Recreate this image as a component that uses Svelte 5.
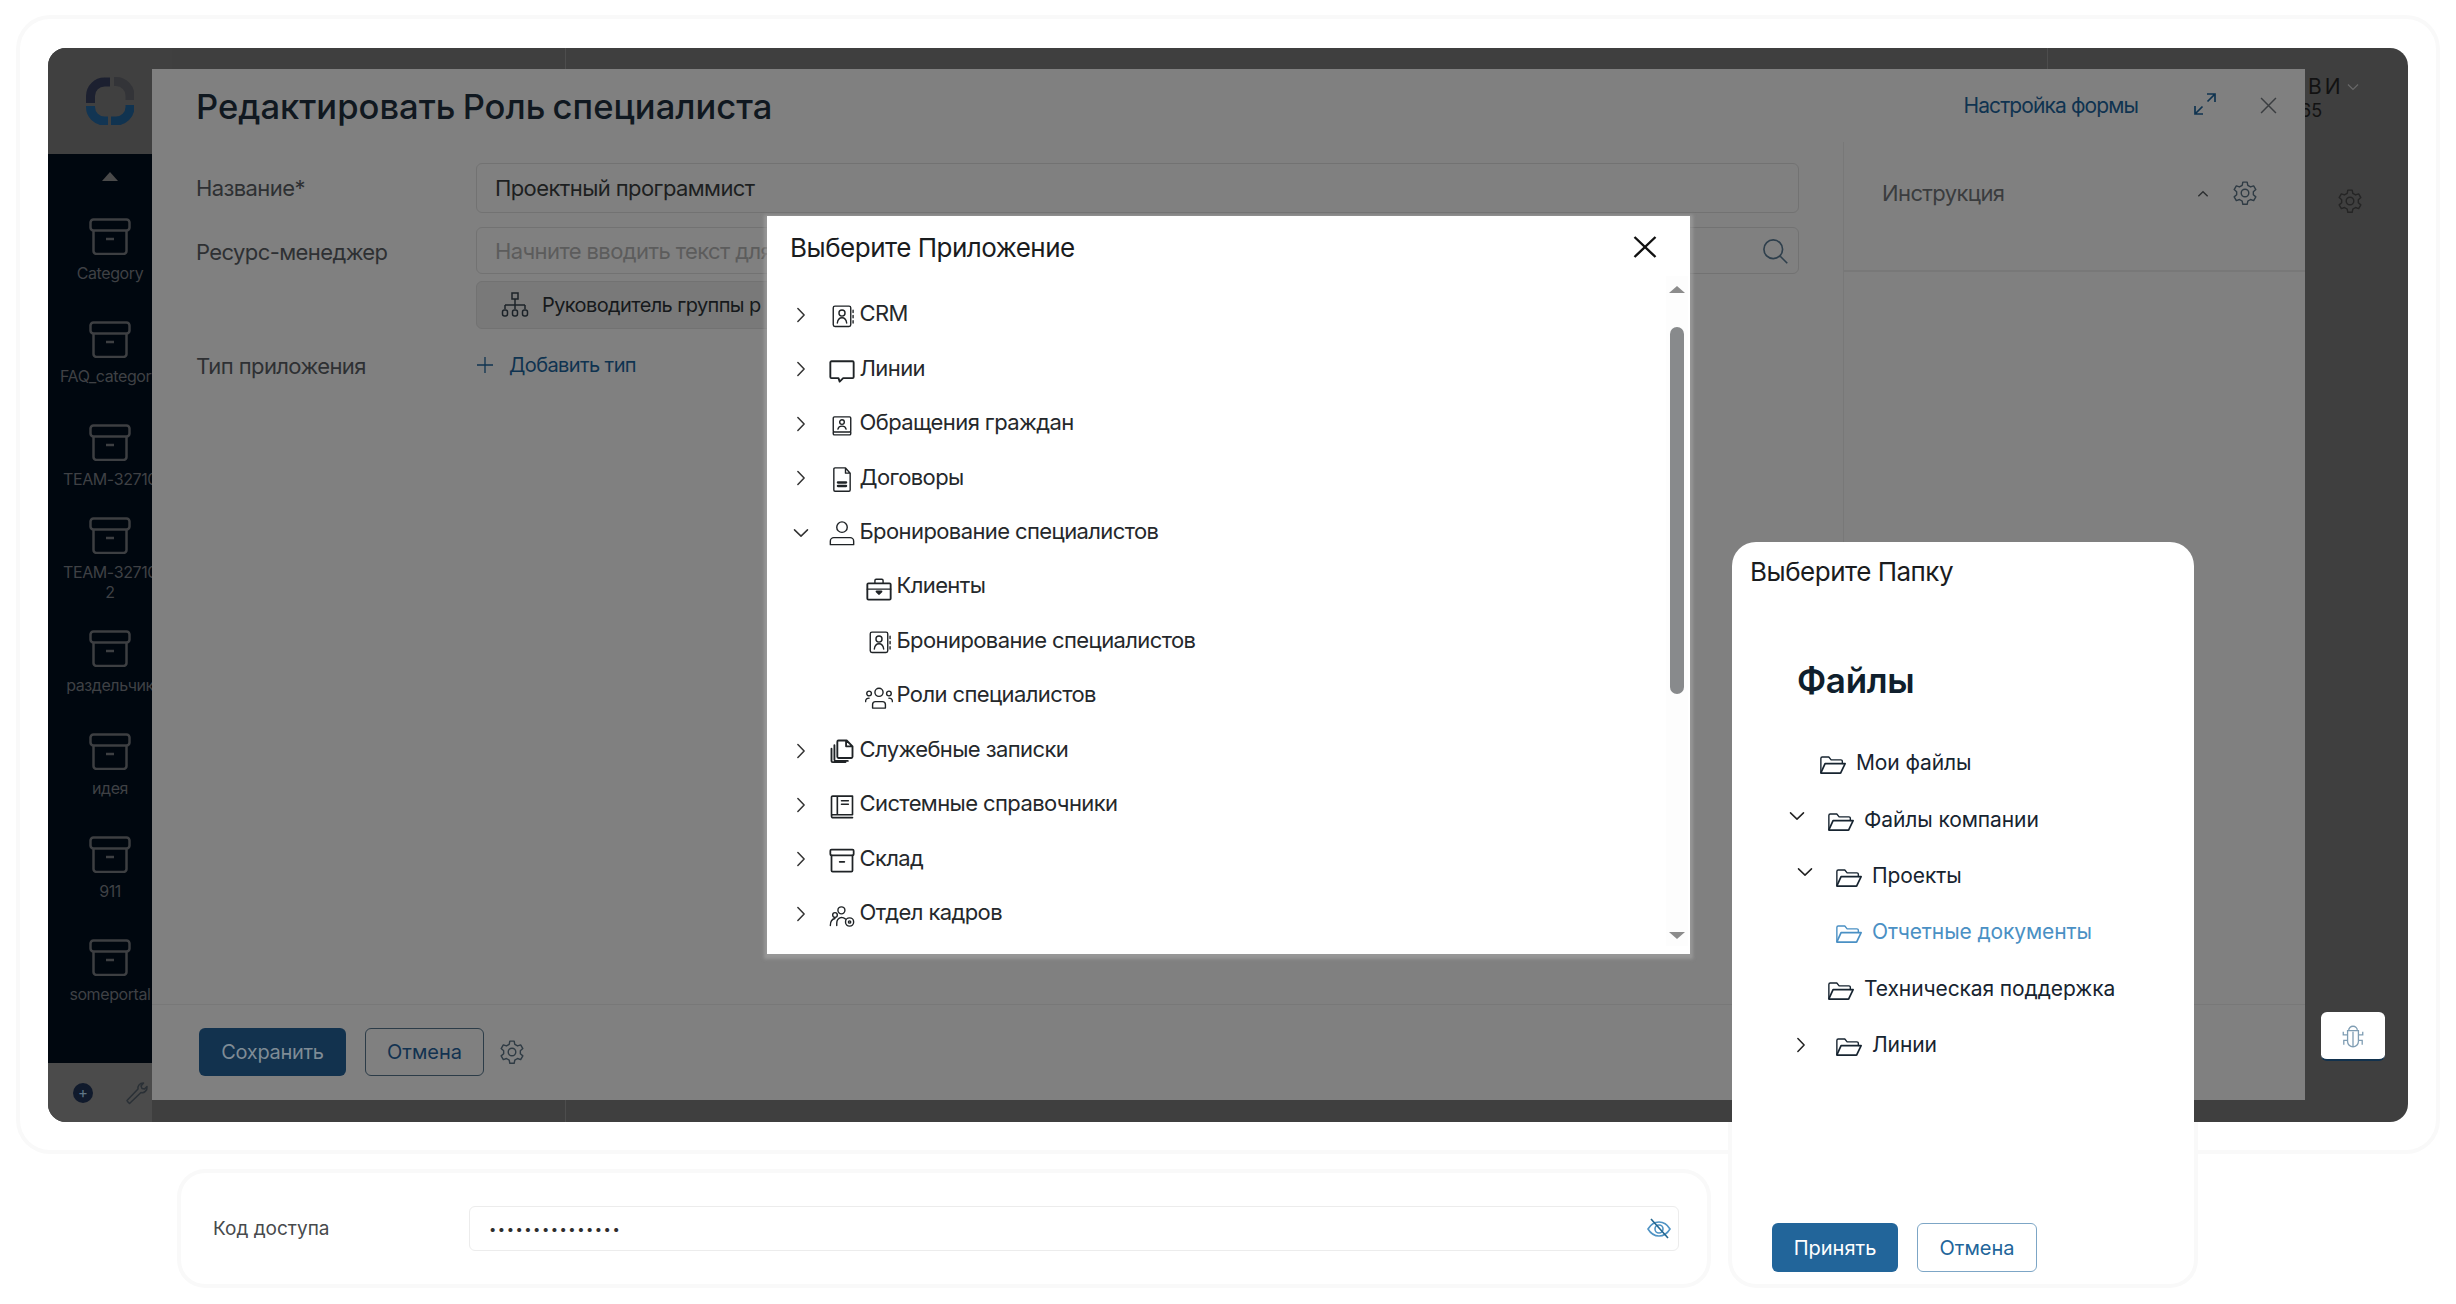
<script>
  const sideItems = [
    { label: "Category" },
    { label: "FAQ_category" },
    { label: "TEAM-32710" },
    { label: "TEAM-32710", extra: "2" },
    { label: "раздельчик" },
    { label: "идея" },
    { label: "911" },
    { label: "someportal" }
  ];

  const apps = [
    { icon: "contact", label: "CRM", arrow: "right" },
    { icon: "chat", label: "Линии", arrow: "right" },
    { icon: "citizen", label: "Обращения граждан", arrow: "right" },
    { icon: "doc", label: "Договоры", arrow: "right" },
    { icon: "person", label: "Бронирование специалистов", arrow: "down" },
    { icon: "case", label: "Клиенты", child: true },
    { icon: "contact", label: "Бронирование специалистов", child: true },
    { icon: "group", label: "Роли специалистов", child: true },
    { icon: "copies", label: "Служебные записки", arrow: "right" },
    { icon: "book", label: "Системные справочники", arrow: "right" },
    { icon: "box", label: "Склад", arrow: "right" },
    { icon: "hr", label: "Отдел кадров", arrow: "right" }
  ];

  const folders = [
    { label: "Мои файлы", cls: "lvl-a" },
    { label: "Файлы компании", cls: "lvl-b", arrow: "down" },
    { label: "Проекты", cls: "lvl-c", arrow: "down" },
    { label: "Отчетные документы", cls: "lvl-c active" },
    { label: "Техническая поддержка", cls: "lvl-b" },
    { label: "Линии", cls: "lvl-c", arrow: "right" }
  ];
</script>

{#snippet glyph(name)}
  <svg class="ico" viewBox="0 0 24 24" fill="none" stroke="currentColor" stroke-width="1.200" stroke-linecap="round" stroke-linejoin="round">
    {#if name === "contact"}
      <rect x="4.500" y="3.500" width="15" height="17.500" rx="1.500" />
      <circle cx="12" cy="9.500" r="2.600" />
      <path d="M8 18c.4-3 2-4.500 4-4.500s3.600 1.500 4 4.500M21.500 7v2M21.500 11.500v2M21.500 16v2" />
    {:else if name === "chat"}
      <path stroke-width="1.600" d="M3 4.500h18a1 1 0 0 1 1 1V18a1 1 0 0 1-1 1h-8l-3 3-1-3H3a1 1 0 0 1-1-1V5.500a1 1 0 0 1 1-1z" />
    {:else if name === "citizen"}
      <rect x="4.500" y="5" width="15" height="13" rx="1" />
      <circle cx="12" cy="9.500" r="2" />
      <path d="M8.500 15.500c.5-2 2-2.500 3.500-2.500s3 .5 3.500 2.500M4.500 18v1.500a1 1 0 0 0 1 1h13a1 1 0 0 0 1-1V18" />
    {:else if name === "doc"}
      <path d="M6 2.500h9l4 4.500v14.500a1 1 0 0 1-1 1H6a1 1 0 0 1-1-1v-18a1 1 0 0 1 1-1zM15 2.500V7h4" />
      <path stroke-width="2" d="M8.500 15h7M8.500 18h7" />
    {:else if name === "person"}
      <circle cx="12" cy="7" r="4.500" />
      <path d="M2 22v-3a3 3 0 0 1 3-3h14a3 3 0 0 1 3 3v3z" />
    {:else if name === "case"}
      <rect x="2" y="8" width="20" height="14" rx="1" stroke-width="1.600" />
      <path d="M8.500 8V5.500a1 1 0 0 1 1-1h5a1 1 0 0 1 1 1V8M2 13h20" />
      <path stroke-width="1.800" d="M10 15h4l-2 2z" />
    {:else if name === "group"}
      <circle cx="12" cy="8" r="3.500" />
      <circle cx="3.500" cy="9" r="2" />
      <circle cx="20.500" cy="9" r="2" />
      <path d="M6.500 21.500v-3a2.500 2.500 0 0 1 2.500-2.500h6a2.500 2.500 0 0 1 2.500 2.500v3zM.5 16c0-2 1-3 3-3M23.500 16c0-2-1-3-3-3" />
    {:else if name === "copies"}
      <path stroke-width="1.600" d="M9 3h7l5 5v9a1 1 0 0 1-1 1H9a1 1 0 0 1-1-1V4a1 1 0 0 1 1-1zM15.500 3v5H21" />
      <path stroke-width="1.600" d="M5.500 7v12.500a1 1 0 0 0 1 1H17M3 10v10.500a1 1 0 0 0 1 1h11" />
    {:else if name === "book"}
      <path stroke-width="1.400" d="M3 4.500a1 1 0 0 1 1-1h17v16H4a1 1 0 0 0-1 1zM8 3.500v16M3 20.500a1.500 1.500 0 0 0 1.500 1.500H21" />
      <path d="M11.500 7.500h6M11.500 10.500h6" />
    {:else if name === "box"}
      <rect x="2" y="3" width="20" height="5" rx="1" stroke-width="1.500" />
      <path stroke-width="1.500" d="M3 8v13a1 1 0 0 0 1 1h16a1 1 0 0 0 1-1V8M10 13.500h4" />
    {:else if name === "hr"}
      <circle cx="11.500" cy="8" r="3" />
      <circle cx="6" cy="12" r="2" />
      <path d="M2 21c0-3.500 1.500-5.500 4-6M7.500 21v-2c0-2.500 1.500-4.500 4-5 1.500 0 2.500.5 3.500 1.500" />
      <circle cx="18.500" cy="18" r="3.500" />
      <circle cx="18.500" cy="18" r="1" />
    {/if}
  </svg>
{/snippet}

{#snippet chevron(dir)}
  <svg class="chev" class:down={dir === "down"} viewBox="0 0 16 16" fill="none" stroke="currentColor" stroke-width="1.200" stroke-linecap="round" stroke-linejoin="round">
    <path d="M5.500 2.800 10.500 8 5.500 13.200" />
  </svg>
{/snippet}

{#snippet gear()}
  <svg class="gear" viewBox="0 0 24 24" fill="none" stroke="currentColor" stroke-width="1.300" stroke-linejoin="round">
    <path d="M10 2h4l.6 3 2.500 1.400 2.900-1 2 3.400-2.300 2 0 2.800 2.300 2-2 3.400-2.900-1-2.500 1.400-.6 3h-4l-.6-3-2.500-1.400-2.900 1-2-3.400 2.300-2 0-2.800-2.300-2 2-3.400 2.900 1L9.400 5z" />
    <circle cx="12" cy="12" r="3.500" />
  </svg>
{/snippet}

{#snippet folderIcon()}
  <svg class="folder" viewBox="0 0 30 24" fill="none" stroke="currentColor" stroke-width="1.500" stroke-linejoin="round" stroke-linecap="round">
    <path d="M2 20V5a1.500 1.500 0 0 1 1.500-1.500h7l2.500 3h10.500a1.500 1.500 0 0 1 1.500 1.500v2.500" />
    <path stroke-width="1.800" d="M2 20.500 6.500 10.500H28L23.500 20a1 1 0 0 1-1 .8H2.500z" />
  </svg>
{/snippet}

<div class="page">
  <section class="frame">
    <div class="app">
      <aside class="side">
        <div class="logo">
          <svg viewBox="0 0 48 48" width="48" height="48" fill="none" stroke-width="9">
            <path d="M4.500 26V19A14 14 0 0 1 18.500 5H24" stroke="#1c2030" />
            <path d="M28 4.500H30A14 14 0 0 1 44 19V23" stroke="#333438" />
            <path d="M44 28V30A14 14 0 0 1 30 44H25" stroke="#103350" />
            <path d="M22 44H18.500A14 14 0 0 1 4.500 30V29" stroke="#123553" />
          </svg>
        </div>
        <div class="side-list">
          <div class="tri"></div>
          {#each sideItems as it}
            <div class="side-item">
              <svg class="arch" viewBox="0 0 42 37" fill="none" stroke="#3d3f42" stroke-width="2.500" stroke-linejoin="round">
                <rect x="1.500" y="1.500" width="39" height="11" rx="3" />
                <path d="M4.500 12.500V33a3 3 0 0 0 3 3h27a3 3 0 0 0 3-3V12.500M17 21h8" />
              </svg>
              <span>{it.label}</span>
              {#if it.extra}<span>{it.extra}</span>{/if}
            </div>
          {/each}
        </div>
        <div class="side-foot">
          <span class="plus">+</span>
          <svg class="wrench" viewBox="0 0 24 24" fill="none" stroke="#2a3036" stroke-width="1.500" stroke-linejoin="round">
            <path d="M3 21l-1-1.500L13 8c-.5-3 1.500-6 5.500-6l-2.500 3 1 2.500 2.500.5L22 5.500c.5 4-3 7-6 6L4.500 22.500z" />
          </svg>
        </div>
      </aside>
      <div class="rest">
        <div class="user">
          ВИ
          <svg class="user-caret" viewBox="0 0 12 8" fill="none" stroke="#686868" stroke-width="1.200"><path d="M1 1.500 6 6.500 11 1.500" /></svg>
        </div>
        <div class="user-sub">65</div>
        <div class="rest-gear">{@render gear()}</div>
      </div>

      <!-- форма поверх страницы -->
      <div class="panel">
        <header class="panel-head">
          <h1>Редактировать Роль специалиста</h1>
          <div class="head-tools">
            <span class="link">Настройка формы</span>
            <svg class="expand" viewBox="0 0 24 24" fill="none" stroke="#0f3350" stroke-width="1.700">
              <path d="M14 2h8v8M21.500 2.500l-7 7M10 22H2v-8M2.500 21.500l7-7" />
            </svg>
            <svg class="close-sm" viewBox="0 0 16 16" fill="none" stroke="#3a3d40" stroke-width="1.400">
              <path d="M1 1l14 14M15 1 1 15" />
            </svg>
          </div>
        </header>
        <div class="panel-body">
          <div class="form">
            <div class="lbl">Название*</div>
            <div class="input first">Проектный программист</div>
            <div class="lbl">Ресурс-менеджер</div>
            <div class="stack">
              <div class="input second">
                <span class="ph">Начните вводить текст для</span>
                <svg class="search" viewBox="0 0 24 24" fill="none" stroke="#2e3f4c" stroke-width="1.400">
                  <circle cx="10.500" cy="10.500" r="8" />
                  <path d="M16.500 16.500 22.500 22.500" />
                </svg>
              </div>
              <div class="chip">
                <svg class="org" viewBox="0 0 28 28" fill="none" stroke="#1c2329" stroke-width="1.500">
                  <rect x="11" y="2" width="6" height="6" />
                  <path d="M14 8v6M4 14h20M4 14v4M14 14v4M24 14v4" />
                  <rect x="1.500" y="19" width="5" height="6" rx="2" />
                  <rect x="11.500" y="19" width="5" height="6" rx="2" />
                  <rect x="21.500" y="19" width="5" height="6" rx="2" />
                </svg>
                Руководитель группы р
              </div>
            </div>
            <div class="lbl type">Тип приложения</div>
            <div class="add">
              <svg class="add-plus" viewBox="0 0 18 18" fill="none" stroke="#0f3350" stroke-width="1.300"><path d="M9 1v16M1 9h16" /></svg>
              Добавить тип
            </div>
          </div>
          <div class="info">
            <div class="info-head">
              <span>Инструкция</span>
              <svg class="caret" viewBox="0 0 12 12" fill="none" stroke="#2c2f31" stroke-width="1.200"><path d="M2 8l4-4 4 4" /></svg>
              {@render gear()}
            </div>
          </div>
        </div>
        <footer class="panel-foot">
          <button class="btn dark-primary">Сохранить</button>
          <button class="btn dark-ghost">Отмена</button>
          {@render gear()}
        </footer>
      </div>

      <div class="bug">
        <svg viewBox="0 0 24 24" fill="none" stroke="#7f9db3" stroke-width="1.200">
          <path d="M8 7a4 4 0 0 1 8 0zM7 7h10v10a5 5 0 0 1-10 0zM12 8v14M7 11H3V8M17 11h4V8M7 16H3.500v4M17 16h3.500v4" />
        </svg>
      </div>
    </div>
  </section>

  <section class="code-card">
    <div class="code-lbl">Код доступа</div>
    <div class="code-input">
      <span class="dots">•••••••••••••••</span>
      <svg class="eye" viewBox="0 0 24 24" fill="none" stroke="#4f93c4" stroke-width="1.600">
        <path d="M1 12c3-5 7-7 11-7s8 2 11 7c-3 5-7 7-11 7s-8-2-11-7z" />
        <circle cx="12" cy="12" r="4" />
        <path stroke="#23668f" d="M4 2l17 19" />
      </svg>
    </div>
  </section>

  <!-- окно выбора приложения -->
  <div class="dlg-app">
    <div class="dlg-title">
      <span>Выберите Приложение</span>
      <svg class="close-lg" viewBox="0 0 24 22" fill="none" stroke="#111" stroke-width="2.400">
        <path d="M1.500 1 22.500 21M22.500 1 1.500 21" />
      </svg>
    </div>
    <ul class="tree">
      {#each apps as a}
        <li class="row" class:child={a.child}>
          {#if a.arrow}{@render chevron(a.arrow)}{/if}
          {@render glyph(a.icon)}
          <span>{a.label}</span>
        </li>
      {/each}
    </ul>
    <div class="scroll">
      <i class="up"></i>
      <b></b>
      <i class="dn"></i>
    </div>
  </div>

  <!-- окно выбора папки -->
  <div class="dlg-folder">
    <div class="f-title">Выберите Папку</div>
    <h2>Файлы</h2>
    <ul class="f-tree">
      {#each folders as f}
        <li class="f-row {f.cls}">
          {#if f.arrow}{@render chevron(f.arrow)}{/if}
          {@render folderIcon()}
          <span>{f.label}</span>
        </li>
      {/each}
    </ul>
    <div class="f-foot">
      <button class="btn primary">Принять</button>
      <button class="btn ghost">Отмена</button>
    </div>
  </div>
</div>

<style>
  :global(body) {
    background: #fff;
    font-family: Inter, "Noto Sans", sans-serif;
  }

  .page {
    position: relative;
    width: 2456px;
    height: 1304px;
    padding: 19px 20px 0;
    box-sizing: border-box;
    overflow: hidden;
  }

  .frame {
    width: 2416px;
    height: 1131px;
    padding: 29px 28px;
    box-sizing: border-box;
    background: #fff;
    border-radius: 30px;
    box-shadow: 0 0 0 4px #f9f9f9;
  }

  .app {
    position: relative;
    display: flex;
    height: 1074px;
    width: 2360px;
    background:
      linear-gradient(#4d4d4d, #4d4d4d) 517px 0 / 1px 100% no-repeat,
      linear-gradient(#4d4d4d, #4d4d4d) 1999px 0 / 1px 100% no-repeat,
      #3f3f3f;
    border-radius: 18px;
    overflow: hidden;
  }

  .side {
    width: 124px;
    display: flex;
    flex-direction: column;
    flex-shrink: 0;
    overflow: hidden;
  }

  .logo {
    height: 106px;
    flex-shrink: 0;
    display: flex;
    align-items: center;
    justify-content: center;
    background: #404040;
  }

  .side-list {
    flex: 1;
    background: #00070f;
    padding-top: 45px;
    position: relative;
  }

  .tri {
    position: absolute;
    top: 18px;
    left: 54px;
    border-left: 8px solid transparent;
    border-right: 8px solid transparent;
    border-bottom: 9px solid #4a4a4a;
  }

  .side-item {
    height: 103px;
    display: flex;
    flex-direction: column;
    align-items: center;
    justify-content: center;
    color: #3f4145;
    font-size: 16px;
    line-height: 20px;
    white-space: nowrap;
    letter-spacing: -0.4px;
  }

  .arch {
    width: 42px;
    height: 37px;
    margin-bottom: 8px;
    flex-shrink: 0;
  }

  .side-foot {
    height: 59px;
    flex-shrink: 0;
    display: flex;
    align-items: center;
    background: linear-gradient(#4b4b4b, #4b4b4b) 0 0 / 104px 100% no-repeat;
    padding-left: 25px;
    gap: 32px;
  }

  .plus {
    width: 20px;
    height: 20px;
    border-radius: 50%;
    background: #101a2c;
    color: #5f7686;
    display: flex;
    align-items: center;
    justify-content: center;
    font-size: 15px;
    flex-shrink: 0;
  }

  .wrench {
    width: 24px;
    height: 24px;
    flex-shrink: 0;
  }

  .rest {
    flex: 1;
    display: flex;
    flex-direction: column;
    padding-left: 2136px;
    box-sizing: border-box;
    color: #121212;
    white-space: nowrap;
  }

  .user {
    letter-spacing: 3px;
    margin-top: 26px;
    line-height: 26px;
    font-size: 21px;
    display: flex;
    align-items: center;
    gap: 3px;
  }

  .user-caret {
    width: 12px;
    height: 8px;
  }

  .user-sub {
    font-size: 18px;
    line-height: 22px;
    margin-left: -8px;
  }

  .rest-gear {
    margin: 65px 0 0 29px;
    color: #252525;
  }

  .gear {
    width: 26px;
    height: 28px;
    display: block;
    flex-shrink: 0;
  }

  .panel {
    position: absolute;
    left: 104px;
    top: 21px;
    width: 2153px;
    height: 1031px;
    display: flex;
    flex-direction: column;
    background: #808080;
    color: #2b2d2f;
    letter-spacing: -0.6px;
  }

  .panel-head {
    height: 73px;
    flex-shrink: 0;
    display: flex;
    align-items: center;
    justify-content: space-between;
    padding: 0 28px 0 44px;
  }

  h1 {
    margin: 0;
    font-size: 34.600px;
    font-weight: 500;
    color: #101820;
    letter-spacing: 0;
    word-spacing: -2px;
  }

  .head-tools {
    display: flex;
    align-items: center;
    color: #0f3350;
    font-size: 21px;
    letter-spacing: -0.9px;
  }

  .link {
    margin-right: 55px;
  }

  .expand {
    width: 24px;
    height: 24px;
    margin-right: 43px;
    margin-top: -4px;
  }

  .close-sm {
    width: 17px;
    height: 17px;
  }

  .panel-body {
    flex: 1;
    display: flex;
    min-height: 0;
  }

  .form {
    width: 1692px;
    box-sizing: border-box;
    border-right: 1px solid #787878;
    padding: 21px 44px 0 44px;
    display: grid;
    grid-template-columns: 280px 1fr;
    grid-auto-rows: min-content;
    row-gap: 14px;
    font-size: 22px;
  }

  .lbl {
    color: #2e3033;
    line-height: 50px;
  }

  .lbl.type {
    margin-top: -2px;
  }

  .input {
    box-sizing: border-box;
    border: 1px solid #727272;
    border-radius: 6px;
    padding: 0 18px;
    display: flex;
    align-items: center;
    justify-content: space-between;
    color: #1d1f21;
  }

  .input.first {
    height: 50px;
  }

  .input.second {
    height: 47px;
  }

  .ph {
    color: #5c5c5c;
    white-space: nowrap;
  }

  .search {
    width: 28px;
    height: 28px;
    margin-right: -9px;
  }

  .stack {
    display: flex;
    flex-direction: column;
    gap: 7px;
  }

  .chip {
    width: 480px;
    height: 48px;
    box-sizing: border-box;
    border: 1px solid #727272;
    border-radius: 6px;
    background: #797979;
    display: flex;
    align-items: center;
    gap: 13px;
    padding-left: 24px;
    font-size: 20px;
    color: #16191c;
    white-space: nowrap;
  }

  .org {
    width: 28px;
    height: 28px;
    flex-shrink: 0;
  }

  .add {
    display: flex;
    align-items: center;
    color: #0f3350;
    font-size: 20px;
    line-height: 50px;
    margin-top: -4px;
  }

  .add-plus {
    width: 18px;
    height: 18px;
    margin-right: 15px;
  }

  .info {
    flex: 1;
  }

  .info-head {
    height: 130px;
    box-sizing: border-box;
    border-bottom: 2px solid #787878;
    padding: 37px 47px 0 38px;
    display: flex;
    align-items: flex-start;
    font-size: 22px;
    color: #3a3c3e;
    line-height: 28px;
  }

  .info-head span {
    flex: 1;
  }

  .info-head :global(.gear),
  .panel-foot :global(.gear) {
    color: #2f3b44;
  }

  .caret {
    width: 14px;
    height: 14px;
    margin: 8px 22px 0 0;
  }

  .panel-foot {
    height: 96px;
    flex-shrink: 0;
    box-sizing: border-box;
    border-top: 1px solid #787878;
    padding: 23px 47px;
    display: flex;
    align-items: flex-start;
    gap: 19px;
  }

  .panel-foot :global(.gear) {
    margin: 10px 0 0 -4px;
  }

  .btn {
    height: 48px;
    box-sizing: border-box;
    border-radius: 6px;
    font: 20px Inter, sans-serif;
    padding: 0;
  }

  .dark-primary {
    width: 147px;
    background: #12324e;
    border: 0;
    color: #7f8c96;
    letter-spacing: -0.3px;
  }

  .dark-ghost {
    width: 119px;
    background: transparent;
    border: 1px solid #2c3c48;
    color: #123250;
  }

  .primary {
    width: 126px;
    height: 49px;
    background: #22659a;
    border: 0;
    color: #fff;
  }

  .ghost {
    width: 120px;
    height: 49px;
    background: #fff;
    border: 1.500px solid #7da6c6;
    color: #22659a;
  }

  .bug {
    position: absolute;
    left: 2273px;
    top: 964px;
    width: 64px;
    height: 49px;
    background: #fff;
    border-radius: 6px;
    border-bottom: 2px solid #12324e;
    box-sizing: border-box;
    display: flex;
    align-items: center;
    justify-content: center;
  }

  .bug svg {
    width: 26px;
    height: 30px;
  }

  .code-card {
    position: absolute;
    left: 181px;
    top: 1173px;
    width: 1526px;
    height: 111px;
    box-sizing: border-box;
    border-radius: 24px;
    box-shadow: 0 0 0 4px #f9f9f9;
    display: flex;
    align-items: center;
    padding: 0 28px 0 32px;
  }

  .code-lbl {
    width: 256px;
    font-size: 19px;
    color: #474a4c;
  }

  .code-input {
    flex: 1;
    height: 45px;
    box-sizing: border-box;
    border: 1px solid #ececec;
    border-radius: 6px;
    display: flex;
    align-items: center;
    justify-content: space-between;
    padding: 0 6px 0 19px;
  }

  .dots {
    font-size: 13px;
    letter-spacing: 1.500px;
    color: #2d2d2d;
  }

  .eye {
    width: 26px;
    height: 24px;
  }

  .dlg-app {
    position: absolute;
    left: 767px;
    top: 216px;
    width: 923px;
    height: 738px;
    background: #fff;
    box-shadow: 0 2px 3px 3px rgba(170, 170, 170, 0.55);
  }

  .dlg-title {
    height: 62px;
    display: flex;
    align-items: center;
    justify-content: space-between;
    padding: 0 33px 0 23px;
    font-size: 26px;
    letter-spacing: -0.5px;
    color: #1a1c1e;
  }

  .close-lg {
    width: 24px;
    height: 22px;
  }

  .tree {
    list-style: none;
    margin: 8px 0 0;
    padding: 0;
    color: #25282b;
    font-size: 22px;
    letter-spacing: -0.6px;
  }

  .row {
    height: 54.450px;
    display: flex;
    align-items: center;
    position: relative;
    padding-left: 92.500px;
    white-space: nowrap;
  }

  .row.child {
    padding-left: 129.500px;
  }

  .row :global(.chev) {
    position: absolute;
    left: 24px;
    top: 19px;
  }

  .chev {
    width: 20px;
    height: 20px;
    color: #333;
  }

  .chev.down {
    transform: rotate(90deg);
  }

  .ico {
    position: absolute;
    margin-left: -32px;
    width: 28px;
    height: 28px;
    margin-top: 5px;
    color: #1f2326;
  }

  .scroll {
    position: absolute;
    right: 2px;
    top: 60px;
    bottom: 8px;
    width: 22px;
    background: #fdfdfd;
  }

  .scroll b {
    position: absolute;
    left: 4px;
    top: 51px;
    width: 14px;
    height: 367px;
    background: #888a8c;
    border-radius: 7px;
  }

  .scroll i {
    position: absolute;
    left: 3px;
    border-left: 8px solid transparent;
    border-right: 8px solid transparent;
  }

  .scroll .up {
    top: 10px;
    border-bottom: 7px solid #8c8c8c;
  }

  .scroll .dn {
    bottom: 7px;
    border-top: 7px solid #8c8c8c;
  }

  .dlg-folder {
    position: absolute;
    left: 1732px;
    top: 542px;
    width: 462px;
    height: 742px;
    background: #fff;
    border-radius: 24px;
    display: flex;
    flex-direction: column;
    box-sizing: border-box;
  }

  /* светлая кайма только там, где окно вышло за тёмную область */
  .dlg-folder::before {
    content: "";
    position: absolute;
    inset: 0;
    border-radius: 24px;
    box-shadow: 0 0 0 4px #f9f9f9;
    clip-path: inset(580px -4px -4px -4px);
    pointer-events: none;
  }

  .f-title {
    margin: 14px 0 0 18px;
    font-size: 26px;
    line-height: 32px;
    letter-spacing: -0.5px;
    color: #1a1c1e;
  }

  h2 {
    margin: 71px 0 0 65px;
    font-size: 35px;
    line-height: 42px;
    font-weight: 600;
    letter-spacing: -0.3px;
    color: #101f2d;
  }

  .f-tree {
    list-style: none;
    margin: 33.500px 0 0;
    padding: 0;
    font-size: 21px;
    letter-spacing: -0.1px;
    color: #172430;
  }

  .f-row {
    height: 56.400px;
    display: flex;
    align-items: center;
    position: relative;
    white-space: nowrap;
  }

  .lvl-a {
    padding-left: 124px;
  }

  .lvl-b {
    padding-left: 132px;
  }

  .lvl-c {
    padding-left: 140px;
  }

  .active {
    color: #4a90c4;
  }

  .folder {
    position: absolute;
    width: 28px;
    height: 24px;
    margin-left: -37px;
    margin-top: 5px;
  }

  .f-row :global(.chev) {
    position: absolute;
    margin-left: -81px;
    margin-top: 0;
    color: #222;
  }

  .f-row :global(.chev.down) {
    margin-left: -77px;
    margin-top: -6px;
  }

  .f-foot {
    margin: auto 0 12px 40px;
    display: flex;
    gap: 19px;
  }
</style>
